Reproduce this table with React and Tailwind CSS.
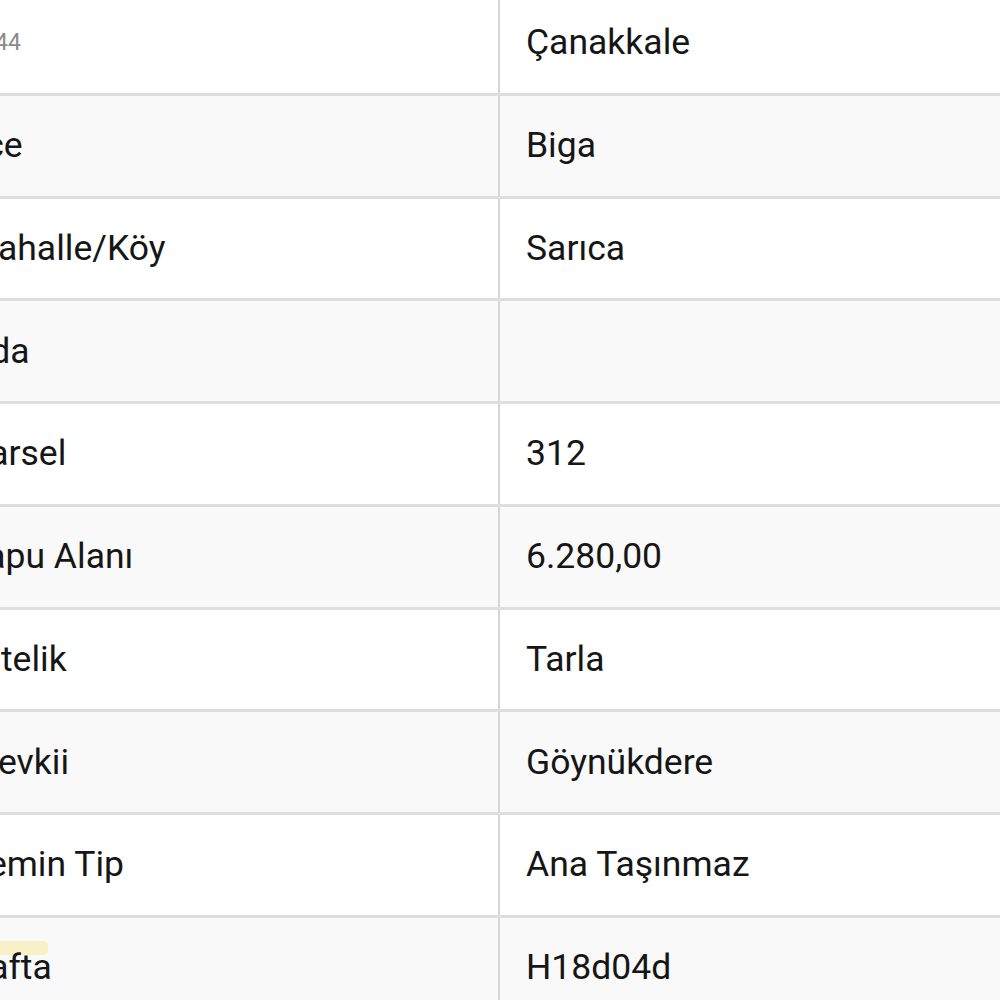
import React from "react";

const rows = [
  { label: "", value: "Çanakkale", note: "44" },
  { label: "İlçe", value: "Biga" },
  { label: "Mahalle/Köy", value: "Sarıca" },
  { label: "Ada", value: "" },
  { label: "Parsel", value: "312" },
  { label: "Tapu Alanı", value: "6.280,00" },
  { label: "Nitelik", value: "Tarla" },
  { label: "Mevkii", value: "Göynükdere" },
  { label: "Zemin Tip", value: "Ana Taşınmaz" },
  { label: "Pafta", value: "H18d04d", mark: true },
];

export default function App() {
  return (
    <div
      className="w-[1000px] h-[1000px] overflow-hidden bg-white text-[#161616]"
      style={{ fontFamily: "Roboto, 'Liberation Sans', sans-serif" }}
    >
      <div className="-mt-[7px] -ml-[59px] w-[1100px]">
        {rows.map((r, i) => (
          <div
            key={i}
            className={
              "flex h-[102.75px] border-b-[3px] border-[#dedede] " +
              (i % 2 === 1 ? "bg-[#f9f9f9]" : "bg-white")
            }
          >
            <div className="relative w-[559px] flex items-center px-[26px] border-r-2 border-[#d6d6d6] text-[35.5px]">
              {r.mark && (
                <div className="absolute left-[57px] top-[23px] w-[50px] h-[14px] rounded-sm bg-[#f7efc2] opacity-90"></div>
              )}
              {r.note ? (
                <span className="ml-[28px] text-[23px] text-[#8a8a8a]">{r.note}</span>
              ) : (
                <span className="relative">{r.label}</span>
              )}
            </div>
            <div className="flex-1 flex items-center px-[26px] text-[35.5px]">
              {r.value}
            </div>
          </div>
        ))}
      </div>
    </div>
  );
}
